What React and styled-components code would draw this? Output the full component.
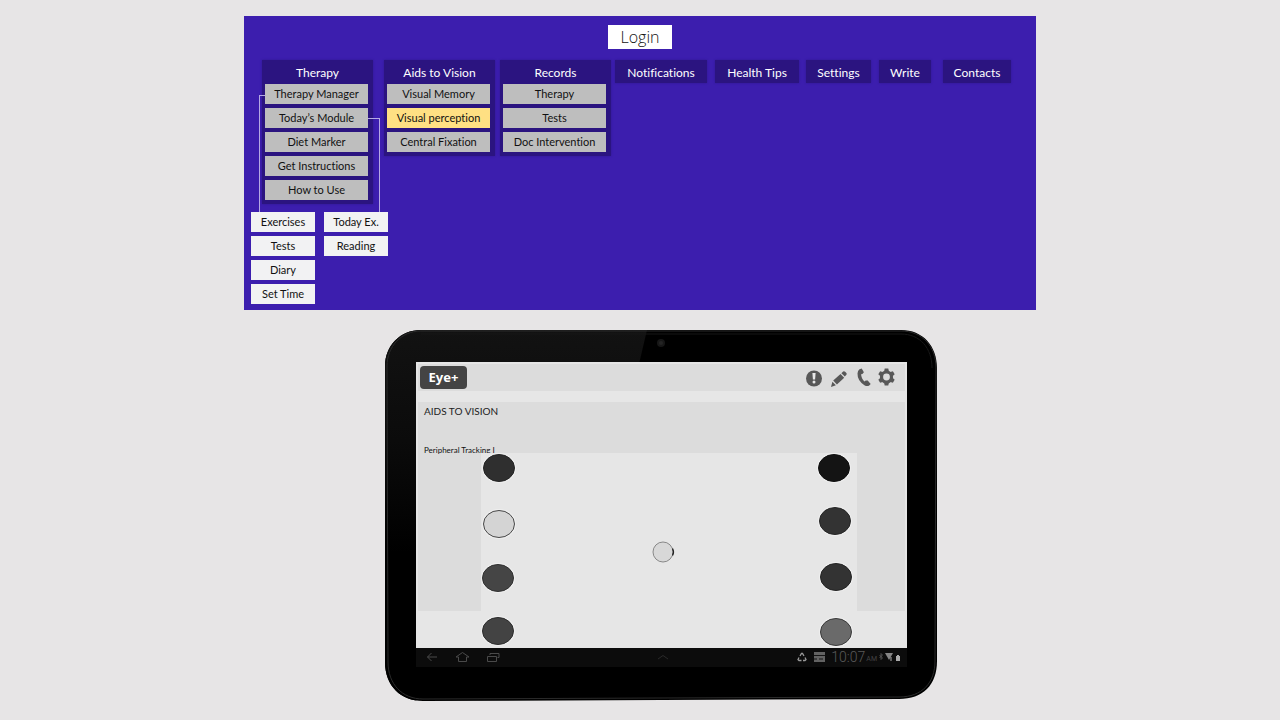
import React from "react";
import styled, { createGlobalStyle } from "styled-components";

const GlobalStyle = createGlobalStyle`
  *, *::before, *::after { box-sizing: border-box; }
  body { margin: 0; background: #e7e5e6; font-family: "Noto Sans", "Open Sans", sans-serif; font-variant-ligatures: none; }
  ul, h1, h2, h3, p { margin: 0; padding: 0; font-weight: 400; }
  ul { list-style: none; }
  button { font-family: inherit; font-variant-ligatures: none; border: 0; padding: 0; margin: 0; cursor: pointer; }
  svg { display: block; }
`;

const Page = styled.main`
  min-height: 100vh;
  padding: 16px 0 19px;
  display: flex;
  flex-direction: column;
  align-items: center;
  gap: 20px;
`;

const SiteMap = styled.section`
  width: 100%;
  max-width: 792px;
  background: #3c1eae;
  padding: 9px 7px 6px;
`;

const LoginButton = styled.button`
  display: block;
  width: 64px;
  height: 24px;
  margin: 0 auto 11px;
  background: #fff;
  color: #111;
  font-family: "Open Sans", "Noto Sans", sans-serif;
  font-size: 16px;
  font-weight: 300;
  line-height: 24px;
`;

const Nav = styled.nav`
  display: flex;
  align-items: flex-start;
  padding-left: 11px;
`;

const Menu = styled.div`
  position: relative;
  width: ${(p) => p.$width}px;
  margin-right: ${(p) => p.$gap}px;
  padding: 0 5px ${(p) => (p.$open ? 4 : 0)}px 3px;
  background: #2b1480;
  box-shadow: 0 0 2px #2f1790;
`;

const MenuTitle = styled.button`
  display: block;
  width: 100%;
  height: ${(p) => (p.$open ? 24 : 23)}px;
  padding: 2px 0 0 2px;
  background: none;
  color: #fff;
  font-family: Lato, "Open Sans", sans-serif;
  font-size: 12px;
  line-height: 22px;
  white-space: nowrap;
`;

const ItemList = styled.ul`
  display: grid;
  gap: 4px;
`;

const Item = styled.button`
  display: block;
  width: 100%;
  height: 20px;
  background: ${(p) => (p.$active ? "#ffe083" : "#bebebe")};
  color: #111;
  font-family: Lato, "Open Sans", sans-serif;
  font-size: 11px;
  line-height: 20px;
  white-space: nowrap;
`;

const SubItem = styled(Item)`
  width: 64px;
  background: #f2f2f3;
`;

const Branch = styled.span`
  position: absolute;
  border: 0 solid #b5a9e4;
  border-top-width: 1px;
`;

const LeftBranch = styled(Branch)`
  left: -3px;
  top: 35px;
  width: 6px;
  height: 117px;
  border-left-width: 1px;
`;

const RightBranch = styled(Branch)`
  left: 106px;
  top: 58px;
  width: 12px;
  height: 94px;
  border-right-width: 1px;
`;

const SubLists = styled.div`
  display: flex;
  align-items: flex-start;
  gap: 9px;
  margin-top: 8px;
`;

const Tablet = styled.section`
  position: relative;
  width: 552px;
  max-width: 100%;
  margin-left: 42px;
  padding: 32px 30px 34px 31px;
`;

const TabletBody = styled.svg`
  position: absolute;
  inset: 0;
  width: 100%;
  height: 100%;
`;

const Screen = styled.div`
  position: relative;
  background: #e6e6e6;
`;

const AppBar = styled.header`
  display: flex;
  align-items: center;
  justify-content: space-between;
  height: 27px;
  margin: 0 2px;
  padding: 0 10px 0 2px;
  background: #dcdcdc;
`;

const Brand = styled.h1`
  width: 47px;
  height: 23px;
  border-radius: 4px;
  background: #444;
  color: #fff;
  font-size: 13px;
  font-weight: 700;
  line-height: 22px;
  text-align: center;
`;

const Tools = styled.div`
  display: flex;
  align-items: center;
  gap: 6px;
`;

const ToolButton = styled.button`
  width: 18px;
  height: 20px;
  background: none;
  color: #585858;
  display: grid;
  place-items: center;
`;

const AppContent = styled.div`
  padding-top: 2px;
`;

const ModuleHead = styled.div`
  display: flex;
  flex-direction: column;
  justify-content: space-between;
  height: 51px;
  margin: 11px 2px 0;
  padding: 1px 6px 0;
  background: #dcdcdc;
  font-family: Lato, "Open Sans", sans-serif;
  white-space: nowrap;
`;

const ModuleTitle = styled.h2`
  color: #222;
  font-size: 10px;
  line-height: 16px;
`;

const ModuleName = styled.p`
  position: relative;
  z-index: 1;
  color: #111;
  font-size: 8px;
  line-height: 6px;
`;

const Exercise = styled.div`
  display: grid;
  grid-template-columns: 63px 1fr 48px;
  align-items: start;
  margin: 0 2px;
`;

const Side = styled.div`
  height: 158px;
  background: #dcdcdc;
`;

const Field = styled.svg`
  position: relative;
  z-index: 2;
  width: 100%;
  height: 195px;
  background: #e6e6e6;
`;

const StatusBar = styled.footer`
  display: grid;
  grid-template-columns: 1fr auto 1fr;
  align-items: center;
  height: 19px;
  padding: 0 6px 1px 9px;
  background: #0c0c0c;
`;

const StatusGroup = styled.div`
  display: flex;
  align-items: center;
  justify-content: ${(p) => (p.$end ? "flex-end" : "flex-start")};
  gap: ${(p) => (p.$end ? 1 : 16)}px;
`;

const KeyButton = styled.button`
  background: none;
  color: #4a4a4a;
`;

const SyncIcon = styled.svg`
  margin-right: 5px;
`;

const Clock = styled.time`
  margin-left: 4px;
  color: #5a5a5a;
  font-family: Roboto, sans-serif;
  font-size: 14px;
  font-weight: 300;
  line-height: 18px;
`;

const Meridiem = styled.small`
  color: #444;
  font-family: Roboto, sans-serif;
  font-size: 7px;
  line-height: 8px;
  padding-top: 4px;
`;

const menus = [
  {
    title: "Therapy", width: 111, gap: 11, branches: true,
    items: ["Therapy Manager", "Today’s Module", "Diet Marker", "Get Instructions", "How to Use"],
  },
  { title: "Aids to Vision", width: 111, gap: 5, items: ["Visual Memory", "Visual perception", "Central Fixation"] },
  { title: "Records", width: 111, gap: 4, items: ["Therapy", "Tests", "Doc Intervention"] },
  { title: "Notifications", width: 92, gap: 8 },
  { title: "Health Tips", width: 84, gap: 7 },
  { title: "Settings", width: 65, gap: 8 },
  { title: "Write", width: 52, gap: 12 },
  { title: "Contacts", width: 68, gap: 0 },
];

const subLists = [
  ["Exercises", "Tests", "Diary", "Set Time"],
  ["Today Ex.", "Reading"],
];

const targets = [
  [18, 15, "#2f2f2f", "#242424"],
  [18, 71, "#d4d4d4", "#484848"],
  [17, 125, "#454545", "#303030"],
  [17, 178, "#434343", "#2c2c2c"],
  [353, 15, "#141414", "#101010"],
  [354, 68, "#333", "#262626"],
  [355, 124, "#333", "#242424"],
  [355, 179, "#6a6a6a", "#3a3a3a"],
];

const line = { fill: "none", stroke: "currentColor" };

function SiteMapPanel() {
  return (
    <SiteMap>
      <LoginButton>Login</LoginButton>
      <Nav>
        {menus.map((m) => (
          <Menu key={m.title} $width={m.width} $gap={m.gap} $open={!!m.items}>
            <MenuTitle $open={!!m.items}>{m.title}</MenuTitle>
            {m.items && (
              <ItemList>
                {m.items.map((name) => (
                  <li key={name}><Item $active={name === "Visual perception"}>{name}</Item></li>
                ))}
              </ItemList>
            )}
            {m.branches && <><LeftBranch /><RightBranch /></>}
          </Menu>
        ))}
      </Nav>
      <SubLists>
        {subLists.map((names) => (
          <ItemList key={names[0]}>
            {names.map((name) => <li key={name}><SubItem>{name}</SubItem></li>)}
          </ItemList>
        ))}
      </SubLists>
    </SiteMap>
  );
}

function TabletFrame() {
  return (
    <TabletBody viewBox="0 0 552 371" preserveAspectRatio="none" aria-hidden="true">
      <defs>
        <linearGradient id="glare" x1="0" y1="0" x2="0" y2="1">
          <stop offset="0" stopColor="#121212" />
          <stop offset="0.3" stopColor="#0b0b0b" />
          <stop offset="0.6" stopColor="#000" />
        </linearGradient>
        <clipPath id="body">
          <path d="M36 0H516C538 0 552 16 552 38L552 331C552 355 538 369 514 369L38 371C16 371 0 356 0 332L0 36C0 16 15 0 36 0Z" />
        </clipPath>
      </defs>
      <g clipPath="url(#body)">
        <path d="M0 0H552V371H0Z" fill="#000" />
        <path d="M0 0H262L254 34L31 371H0Z" fill="url(#glare)" />
        <path d="M36 1H516C537 1 551 16 551 38L550 331C550 353 537 367 514 367L38 369C17 369 3 354 3 332L2 36C2 17 16 1 36 1Z" fill="none" stroke="#2a2a2a" />
        <path d="M36 4H516C535 4 547 18 547 38" fill="none" stroke="#171717" />
        <circle cx="276" cy="13" r="4" fill="#171717" />
        <circle cx="276" cy="13" r="2" fill="#242424" />
      </g>
    </TabletBody>
  );
}

function TabletScreen() {
  return (
    <Screen>
      <AppContent>
        <AppBar>
          <Brand>Eye+</Brand>
          <Tools>
            <ToolButton aria-label="Notifications">
              <svg width="18" height="18" viewBox="0 0 18 18">
                <circle cx="9" cy="9.500" r="8" fill="currentColor" />
                <path d="M7.400 4h3.200l-.5 6.500H7.900z" fill="#e8e8e8" />
                <circle cx="9" cy="13" r="1.500" fill="#e8e8e8" />
              </svg>
            </ToolButton>
            <ToolButton aria-label="Write">
              <svg width="18" height="18" viewBox="0 0 18 18" fill="currentColor">
                <path d="M2 18l1.400-5.300L6.900 16.200z" />
                <path d="M4.200 11.600L11.500 5l3.700 3.700L7.900 15.500z" />
                <path d="M12.400 4.200l1.700-1.600q1-.8 2 .1l1.300 1.400q.6.800 0 1.700l-1.600 1.700z" />
              </svg>
            </ToolButton>
            <ToolButton aria-label="Call">
              <svg width="18" height="20" viewBox="0 0 18 20" fill="currentColor">
                <path d="M6.500 1.200L8.700.5l2.200 3.700-1.500 1.900-1.300.1q.2 4.400 3.400 7.200l1.200-.9 2 .1 3 3.400-1.500 1.600q-2.100 1.200-4.800-.4Q4.300 12.800 4.500 5.600 4.600 2.500 6.500 1.200z" />
              </svg>
            </ToolButton>
            <ToolButton aria-label="Settings">
              <svg width="18" height="20" viewBox="0 0 18 20">
                <circle cx="9.500" cy="9" r="5" fill="none" stroke="currentColor" strokeWidth="3.200" />
                <g fill="currentColor">
                  {[0, 60, 120, 180, 240, 300].map((a) => (
                    <path key={a} d="M7 4L7.700.6h3.600L12 4z" transform={`rotate(${a} 9.5 9)`} />
                  ))}
                </g>
              </svg>
            </ToolButton>
          </Tools>
        </AppBar>
        <ModuleHead>
          <ModuleTitle>AIDS TO VISION</ModuleTitle>
          <ModuleName>Peripheral Tracking I</ModuleName>
        </ModuleHead>
        <Exercise>
          <Side />
          <Field viewBox="0 0 376 195" preserveAspectRatio="xMidYMid meet" role="img" aria-label="Tracking targets">
            {targets.map(([x, y, fill, edge]) => (
              <g key={`${x}-${y}`}>
                <ellipse cx={x} cy={y} rx="17" ry="15" fill="#efefef" />
                <ellipse cx={x} cy={y} rx="15.500" ry="13.500" fill={fill} stroke={edge} />
              </g>
            ))}
            <circle cx="182" cy="99" r="10" fill="#d8d8d8" stroke="#888" />
            <path d="M191.500 95.500q2 3.500 0 7" fill="none" stroke="#222" strokeWidth="1.300" />
          </Field>
          <Side />
        </Exercise>
      </AppContent>
      <StatusBar>
        <StatusGroup>
          <KeyButton aria-label="Back">
            <svg width="14" height="12" viewBox="0 0 14 12" {...line}><path d="M12 6H2.500M6.500 2l-4 4 4 4" /></svg>
          </KeyButton>
          <KeyButton aria-label="Home">
            <svg width="15" height="12" viewBox="0 0 15 12" {...line}><path d="M7.500 1.500L1 6h2.500v4.500h8V6H14z" /></svg>
          </KeyButton>
          <KeyButton aria-label="Recent apps">
            <svg width="14" height="12" viewBox="0 0 14 12" {...line}><path d="M1.500 5.500h9v5h-9zM4 4V2.500h9v4h-1.500" /></svg>
          </KeyButton>
        </StatusGroup>
        <KeyButton aria-label="Open tray">
          <svg width="12" height="8" viewBox="0 0 12 8" fill="none" stroke="#2a2a2a"><path d="M1 6l5-3.500L11 6" /></svg>
        </KeyButton>
        <StatusGroup $end>
          <SyncIcon width="10" height="10" viewBox="0 0 10 10" fill="none" stroke="#999" strokeWidth="1.300">
            <path d="M3 4l1.500-2.500h1L7 4M8 5.500l1 2-1 1H6M4.500 8.500H2l-1-1 1-2" />
          </SyncIcon>
          <svg width="13" height="12" viewBox="0 0 13 12">
            <path d="M1 1h11v10H1z" fill="#626262" />
            <path d="M1 4.500h11M1 8h3M6 8h4" stroke="#151515" fill="none" />
          </svg>
          <Clock>10:07</Clock>
          <Meridiem>AM</Meridiem>
          <svg width="23" height="12" viewBox="0 0 23 12">
            <path d="M1.500 4l3 3-1.500 1.500v-6L4.500 4l-3 3" fill="none" stroke="#666" strokeWidth=".7" />
            <path d="M7 2h8l-4 7z" fill="#858585" />
            <path d="M13 6v4" stroke="#aaa" />
            <path d="M18 5h1V4h2v1h1v5h-4z" fill="#aaa" />
          </svg>
        </StatusGroup>
      </StatusBar>
    </Screen>
  );
}

export default function App() {
  return (
    <>
      <GlobalStyle />
      <Page>
        <SiteMapPanel />
        <Tablet>
          <TabletFrame />
          <TabletScreen />
        </Tablet>
      </Page>
    </>
  );
}
